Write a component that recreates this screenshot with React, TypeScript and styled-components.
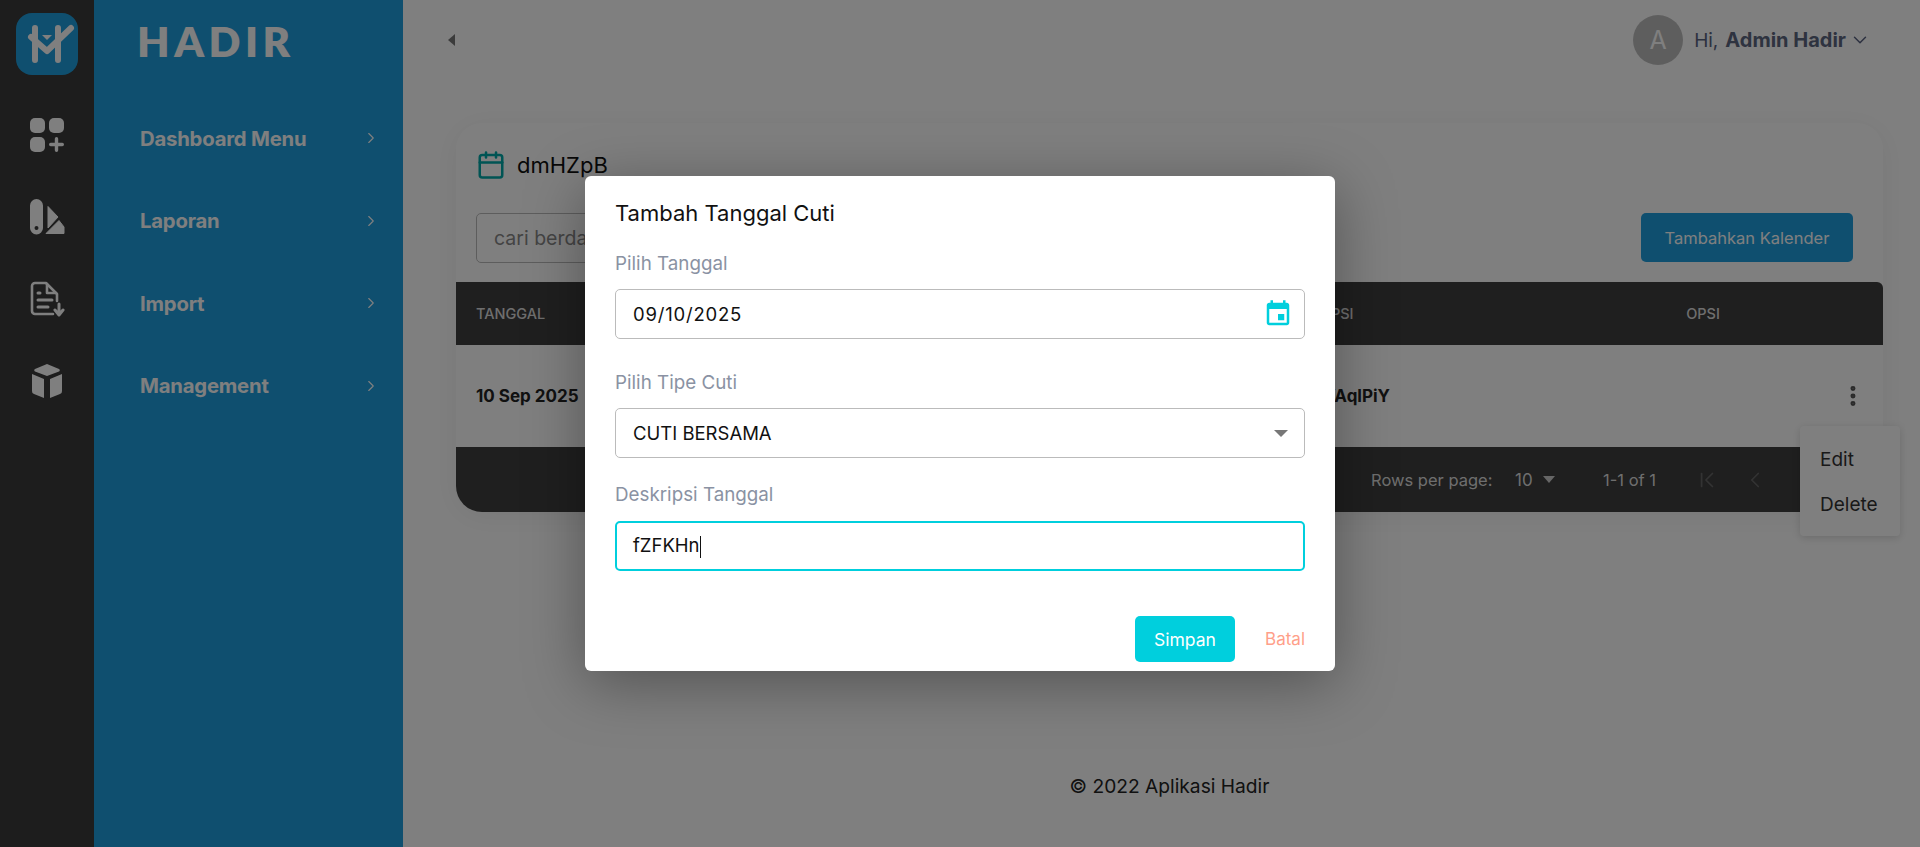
import React from "react";
import styled, { createGlobalStyle } from "styled-components";
import { ChevronRight, ChevronDown, ChevronLeft, ChevronFirst, Calendar, MoreVertical } from "lucide-react";

const FONT = `"Inter", "Noto Sans", "Liberation Sans", sans-serif`;

const Global = createGlobalStyle`
  html, body { margin: 0; padding: 0; height: 100%; }
  body { font-family: ${FONT}; background: #fff; overflow: hidden; }
  * { box-sizing: border-box; }
`;

const Shell = styled.div`display: flex; height: 847px; position: relative;`;
const Rail = styled.nav`
  width: 94px; flex: none; background: #3a3a3a; display: flex; flex-direction: column; align-items: center;
  padding-top: 13px;
`;
const LogoTile = styled.div`
  width: 62px; height: 62px; border-radius: 16px; background: #1f9fdf; margin-bottom: 42px; display: flex;
`;
const RailIcon = styled.div`
  height: 36px; width: 36px; margin-bottom: 46px; display: flex; align-items: center; justify-content: center;
`;
const Side = styled.aside`
  width: 309px; flex: none; background: #1f9fdf; color: #fff; display: flex; flex-direction: column;
`;
const Brand = styled.div`
  font-size: 42px; font-weight: 800; letter-spacing: 4.500px; line-height: 32px; padding: 25px 0 0 43px; height: 97px;
  font-family: "Lato", ${FONT};
`;
const NavRow = styled.div`
  height: 82.5px; display: flex; align-items: center; justify-content: space-between; padding: 0 23px 0 46px;
  font-size: 20.300px; font-weight: 700; letter-spacing: -0.2px;
`;
const Main = styled.main`flex: 1; display: flex; flex-direction: column; min-width: 0; padding: 0 37px 0 53px;`;
const TopBar = styled.header`height: 123px; padding-top: 15px; display: flex; justify-content: space-between; align-items: flex-start;`;
const Collapse = styled.div`
  width: 0; height: 0; margin: 19px 0 0 -8px; border-top: 6px solid transparent; border-bottom: 6px solid transparent; border-right: 7px solid #777;
`;
const User = styled.div`display: flex; align-items: center; height: 50px; font-size: 19px; color: #596280; margin-right: 12px;`;
const Avatar = styled.div`
  width: 50px; height: 50px; border-radius: 50%; background: #bdbdbd; color: #fff; display: flex; align-items: center; justify-content: center;
  font-size: 25px; margin-right: 11px;
`;
const UserName = styled.b`font-weight: 700; margin-left: 7px; color: #5c6680; font-size: 20px;`;
const Card = styled.section`
  background: #fff; border-radius: 26px; height: 389px; box-shadow: 0 4px 30px rgba(0,0,0,.06); display: flex; flex-direction: column;
`;
const CardHead = styled.div`
  height: 90px; padding: 27px 20px 0 20px; display: flex; align-items: flex-start; gap: 11px; font-size: 22px; color: #111;
`;
const CardTitle = styled.span`padding-top: 2px;`;
const Tools = styled.div`display: flex; justify-content: space-between; padding: 0 30px 0 20px; height: 69px; align-items: flex-start;`;
const Search = styled.div`
  width: 400px; height: 50px; border: 1px solid #bbb; border-radius: 5px; padding: 0 17px; display: flex; align-items: center; font-size: 19.5px; color: #888;
`;
const AddButton = styled.button`
  width: 212px; height: 49px; border: 0; border-radius: 5px; background: #1f9fdf; color: #fff; font: 400 16.5px ${FONT};
`;
const HeadRow = styled.div`
  height: 63px; background: #3e3e3e; color: #ddd; font-size: 14.5px; font-weight: 500; display: grid; grid-template-columns: 803px 75px 1fr 360px; align-items: center; padding-left: 20px; border-radius: 0 6px 0 0;
`;
const DataRow = styled.div`
  height: 102px; display: grid; grid-template-columns: 840px 74px 1fr 43px; align-items: center; padding-left: 20px; font-size: 17px; font-weight: 700; color: #222;
`;
const Right = styled.span`text-align: right;`;
const Center = styled.span`text-align: center;`;
const Dots = styled.div`display: flex; color: #555;`;
const Foot = styled.div`
  height: 65px; background: #3e3e3e; border-radius: 0 0 26px 26px; color: #ddd; font-size: 16.5px; display: flex; align-items: center; padding-left: 915px;
`;
const RowsLabel = styled.span`width: 144px;`;
const RowsValue = styled.span`width: 28px; font-size: 17px;`;
const SmallCaret = styled.span`
  width: 0; height: 0; border-left: 6.5px solid transparent; border-right: 6.5px solid transparent; border-top: 7px solid #ccc; margin-right: 48px;
`;
const RangeLabel = styled.span`width: 94px;`;
const PageIcons = styled.div`display: flex; gap: 22px; color: #666; margin-left: -3px;`;
const Copy = styled.footer`margin-top: 262px; text-align: center; font-size: 19.2px; color: #222; line-height: 24px;`;

const Menu = styled.div`
  position: absolute; left: 1800px; top: 426px; width: 100px; height: 110px; background: #fff; border-radius: 4px; box-shadow: 0 2px 8px rgba(0,0,0,.15);
  padding: 23px 20px; display: flex; flex-direction: column; gap: 23px; font-size: 19px; color: #333; line-height: 22px;
`;
const Overlay = styled.div`position: absolute; inset: 0; background: rgba(0,0,0,.5);`;
const Modal = styled.div`
  position: absolute; left: 585px; top: 176px; width: 750px; height: 495px; background: #fff; border-radius: 6px; padding: 25px 30px 0;
  box-shadow: 0 12px 60px rgba(0,0,0,.35); display: flex; flex-direction: column;
`;
const Title = styled.h2`margin: 0 0 27px; font-size: 22px; font-weight: 400; color: #111; line-height: 24px;`;
const Label = styled.label<{ $after: number }>`
  display: block; font-size: 18.8px; color: #8a92a3; line-height: 24px; margin-bottom: ${p => p.$after}px;
`;
const Field = styled.div<{ $focus?: boolean; $after: number }>`
  height: 50px; border: ${p => (p.$focus ? "2px solid #00cfdd" : "1px solid #bbb")}; border-radius: 5px; padding: 0 ${p => (p.$focus ? 16 : 17)}px;
  display: flex; align-items: center; justify-content: space-between; font-size: 18.5px; color: #111; margin-bottom: ${p => p.$after}px;
`;
const DateText = styled.span`letter-spacing: 0.8px;`;
const Caret = styled.span`display: inline-block; width: 1px; height: 22px; background: #111; vertical-align: middle;`;
const SelectArrow = styled.span`
  width: 0; height: 0; border-left: 7px solid transparent; border-right: 7px solid transparent; border-top: 7px solid #777; margin-right: -1px;
`;
const DateIcon = styled.svg`margin-right: -6px;`;
const Actions = styled.div`display: flex; justify-content: flex-end; align-items: center; gap: 30px; margin-top: 45px;`;
const Save = styled.button`
  width: 100px; height: 46px; border: 0; border-radius: 5px; background: #00cfdd; color: #fff; font: 400 17.5px ${FONT};
`;
const Cancel = styled.span`font-size: 17px; color: #ff9f8a;`;

const I = "#ffffff";

export default function App() {
  return (
    <Shell>
      <Global />
      <Rail>
        <LogoTile>
          <svg width="62" height="62" viewBox="0 0 62 62" fill="none" stroke={I} strokeLinecap="round" strokeLinejoin="round">
            <path d="M19 15v32M42 15v32" strokeWidth="6" />
            <path d="M15 24l16 14 24-23" strokeWidth="6" />
            <path d="M26 22h10l-5 5z" fill={I} stroke="none" />
          </svg>
        </LogoTile>
        <RailIcon>
          <svg width="36" height="36" viewBox="0 0 36 36" fill={I}>
            <rect x="1" y="1" width="15" height="15" rx="5" />
            <rect x="20" y="1" width="15" height="15" rx="5" />
            <rect x="1" y="20" width="15" height="15" rx="5" />
            <path d="M27.500 20a1.700 1.700 0 0 1 1.700 1.700v4.100h4.100a1.700 1.700 0 0 1 0 3.400h-4.100v4.100a1.700 1.700 0 0 1-3.400 0v-4.100h-4.100a1.700 1.700 0 0 1 0-3.400h4.100v-4.100a1.700 1.700 0 0 1 1.700-1.700z" />
          </svg>
        </RailIcon>
        <RailIcon>
          <svg width="36" height="36" viewBox="0 0 36 36" fill={I}>
            <path fillRule="evenodd" d="M1 6.500a6.500 6.500 0 0 1 13 0V29a6.500 6.500 0 0 1-13 0zM7.500 27a2 2 0 1 0 0 4 2 2 0 0 0 0-4z" />
            <path d="M19 7.500l10 10.500-10 11z" stroke={I} strokeWidth="1" strokeLinejoin="round" />
            <path d="M17 34.500l13-13 5 6.500v6.500z" stroke={I} strokeWidth="1" strokeLinejoin="round" />
          </svg>
        </RailIcon>
        <RailIcon>
          <svg width="36" height="36" viewBox="0 0 36 36" fill="none" stroke={I} strokeWidth="2.600" strokeLinecap="round" strokeLinejoin="round">
            <path d="M24 33H6a3 3 0 0 1-3-3V5a3 3 0 0 1 3-3h11l11 11v7" />
            <path d="M18 3v9h9" />
            <path d="M9 12h2M9 19h14M9 26h10" strokeWidth="3" />
            <path d="M30 23v10M26 29l4 5 4-5" strokeWidth="3" />
          </svg>
        </RailIcon>
        <RailIcon>
          <svg width="34" height="36" viewBox="0 0 34 36" fill={I}>
            <path d="M17 1l12 5a1.500 1.500 0 0 1 0 2.600L17 13 5 8.600a1.500 1.500 0 0 1 0-2.600z" />
            <path d="M2 11l12 5v19L4 31a3 3 0 0 1-2-3z" />
            <path d="M32 11l-12 5v19l10-4a3 3 0 0 0 2-3z" />
          </svg>
        </RailIcon>
      </Rail>
      <Side>
        <Brand>HADIR</Brand>
        {["Dashboard Menu", "Laporan", "Import", "Management"].map(t => (
          <NavRow key={t}>
            {t}
            <ChevronRight size={18} strokeWidth={1.5} />
          </NavRow>
        ))}
      </Side>
      <Main>
        <TopBar>
          <Collapse />
          <User>
            <Avatar>A</Avatar>
            Hi, <UserName>Admin Hadir</UserName>
            <ChevronDown size={22} strokeWidth={1.6} style={{ marginLeft: 3 }} />
          </User>
        </TopBar>
        <Card>
          <CardHead>
            <Calendar size={30} color="#00a8a8" strokeWidth={2} />
            <CardTitle>dmHZpB</CardTitle>
          </CardHead>
          <Tools>
            <Search>cari berdasarkan</Search>
            <AddButton>Tambahkan Kalender</AddButton>
          </Tools>
          <HeadRow>
            <span>TANGGAL</span>
            <span>DESKRIPSI</span>
            <span />
            <Center>OPSI</Center>
          </HeadRow>
          <DataRow>
            <span>10 Sep 2025</span>
            <Right>YAqlPiY</Right>
            <span />
            <Dots><MoreVertical size={26} strokeWidth={2.6} /></Dots>
          </DataRow>
          <Foot>
            <RowsLabel>Rows per page:</RowsLabel>
            <RowsValue>10</RowsValue>
            <SmallCaret />
            <RangeLabel>1-1 of 1</RangeLabel>
            <PageIcons>
              <ChevronFirst size={26} strokeWidth={1.6} />
              <ChevronLeft size={26} strokeWidth={1.6} />
            </PageIcons>
          </Foot>
        </Card>
        <Copy>© 2022 Aplikasi Hadir</Copy>
      </Main>
      <Menu>
        <span>Edit</span>
        <span>Delete</span>
      </Menu>
      <Overlay />
      <Modal>
        <Title>Tambah Tanggal Cuti</Title>
        <Label $after={13}>Pilih Tanggal</Label>
        <Field $after={32}>
          <DateText>09/10/2025</DateText>
          <DateIcon width="30" height="30" viewBox="0 0 24 24" fill="#00cfdd">
            <path d="M17 12h-5v5h5v-5zM16 1v2H8V1H6v2H5c-1.110 0-1.990.9-1.990 2L3 19c0 1.100.89 2 2 2h14c1.100 0 2-.9 2-2V5c0-1.100-.9-2-2-2h-1V1h-2zm3 18H5V8h14v11z" />
          </DateIcon>
        </Field>
        <Label $after={13}>Pilih Tipe Cuti</Label>
        <Field $after={25}>
          CUTI BERSAMA
          <SelectArrow />
        </Field>
        <Label $after={14}>Deskripsi Tanggal</Label>
        <Field $focus $after={0}>
          <span>fZFKHn<Caret /></span>
        </Field>
        <Actions>
          <Save>Simpan</Save>
          <Cancel>Batal</Cancel>
        </Actions>
      </Modal>
    </Shell>
  );
}
